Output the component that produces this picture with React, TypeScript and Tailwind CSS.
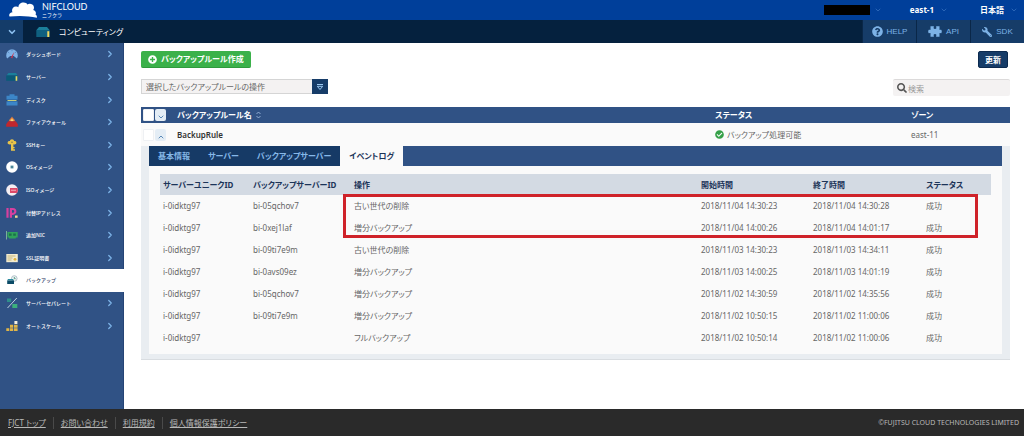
import { useState } from "react";
import type { ReactNode } from "react";
import { ChevronDown, ChevronRight, ChevronUp } from "lucide-react";
import {
  FaCheckCircle,
  FaPlusCircle,
  FaQuestionCircle,
  FaSearch,
  FaWrench,
} from "react-icons/fa";

/* ---------------------- DATA ---------------------- */

const logs = [
  ["i-0idktg97", "bi-05qchov7", "古い世代の削除", "2018/11/04 14:30:23", "2018/11/04 14:30:28", "成功"],
  ["i-0idktg97", "bi-0xej1laf", "増分バックアップ", "2018/11/04 14:00:26", "2018/11/04 14:01:17", "成功"],
  ["i-0idktg97", "bi-09ti7e9m", "古い世代の削除", "2018/11/03 14:30:23", "2018/11/03 14:34:11", "成功"],
  ["i-0idktg97", "bi-0avs09ez", "増分バックアップ", "2018/11/03 14:00:25", "2018/11/03 14:01:19", "成功"],
  ["i-0idktg97", "bi-05qchov7", "増分バックアップ", "2018/11/02 14:30:59", "2018/11/02 14:35:56", "成功"],
  ["i-0idktg97", "bi-09ti7e9m", "増分バックアップ", "2018/11/02 10:50:15", "2018/11/02 11:00:06", "成功"],
  ["i-0idktg97", "", "フルバックアップ", "2018/11/02 10:50:14", "2018/11/02 11:00:06", "成功"],
];

const tabs = ["基本情報", "サーバー", "バックアップサーバー", "イベントログ"];

const footerLinks = ["FJCT トップ", "お問い合わせ", "利用規約", "個人情報保護ポリシー"];

/* ---------------------- ICONS ---------------------- */

const Svg = ({ children }: { children: ReactNode }) => (
  <svg viewBox="0 0 12 12" className="w-3 h-3 shrink-0" aria-hidden="true">
    {children}
  </svg>
);

const ServerIcon = () => (
  <Svg>
    <path d="M2.5 2h7.5l1.8 2.4H.5z" fill="#1b7f9b" />
    <path d="M.2 4.4h11.6v5.4H.2z" fill="#0b5a78" />
    <path d="M9.6 5.2h1.7v4.6H9.6z" fill="#e8d96a" />
  </Svg>
);

const menu: { label: string; icon: ReactNode }[] = [
  {
    label: "ダッシュボード",
    icon: (
      <Svg>
        <path d="M.2 7.5a5.8 6.200 0 1 1 11.600 0c0 1.200-.4 2.200-1 3L7.800 8H4.200l-3 2.500c-.6-.8-1-1.800-1-3z" fill="#7fb2e6" />
        <path d="M6 1.500v1.600M2 4l1.300 1M10 4 8.700 5" stroke="#4a78b4" strokeWidth=".7" />
        <path d="m8.200 4-3.400 5.600 1.500.8z" fill="#c8364d" />
      </Svg>
    ),
  },
  { label: "サーバー", icon: <ServerIcon /> },
  {
    label: "ディスク",
    icon: (
      <Svg>
        <path d="M3.5.3h5v1.5h3v4H.5v-4h3z" fill="#3c86c8" />
        <path d="M.5 7.2h11v4.3H.5z" fill="#3c86c8" />
        <path d="M.5 5.8h11v1.4H.5z" fill="#1f4a78" />
        <path d="M1.5 6h9v.9h-9z" fill="#d8dc7c" />
      </Svg>
    ),
  },
  {
    label: "ファイアウォール",
    icon: (
      <Svg>
        <path d="M6 .6c.7 1.8 3 2.4 3 4.6H3C3 3 5.300 2.400 6 .6z" fill="#e8803c" />
        <path d="M6 2.600c.5 1 1.600 1.400 1.600 2.800H4.400c0-1.400 1.100-1.800 1.600-2.800z" fill="#f8d878" />
        <path d="M2.200 5.200h7.600l2 3v2.600H.2V8.200z" fill="#c1272d" />
      </Svg>
    ),
  },
  {
    label: "SSHキー",
    icon: (
      <Svg>
        <path
          d="M6 .3c1.300 0 2 .8 2 1.700 1.200-.3 2.400.4 2.400 1.700S9 5.800 7.400 5.200V8h1.200v1.200H7.400v1.100H9v1.400H5V5.200C3 5.800 1.600 5 1.600 3.700S2.800 1.700 4 2C4 1.100 4.700.3 6 .3z"
          fill="#e8c34a"
        />
        <circle cx="6" cy="3.300" r=".8" fill="#8a7a4a" />
      </Svg>
    ),
  },
  {
    label: "OSイメージ",
    icon: (
      <Svg>
        <circle cx="6" cy="6" r="5.800" fill="#fff" />
        <circle cx="6" cy="6" r="2.100" fill="#a9c8cf" />
        <circle cx="6" cy="6" r="1" fill="#2f6f86" />
      </Svg>
    ),
  },
  {
    label: "ISOイメージ",
    icon: (
      <Svg>
        <circle cx="6" cy="6" r="5.800" fill="#f4eef2" />
        <path d="M4 4h7.400a5.800 5.800 0 0 1-.4 5H4z" fill="#dc4868" />
        <path d="M5 5.800h5v.8H5z" fill="#f7c6d0" />
      </Svg>
    ),
  },
  {
    label: "付替IPアドレス",
    icon: (
      <Svg>
        <path
          d="M1.500 1v9.800M4.900 10.800V2h2a2.300 2.300 0 0 1 0 4.800h-2"
          fill="none"
          stroke="#d6409f"
          strokeWidth="2.200"
        />
        <path d="M9 8.500h2.600v2.300H9z" fill="#f0d890" />
      </Svg>
    ),
  },
  {
    label: "追加NIC",
    icon: (
      <Svg>
        <path d="M.5 2v8.500" stroke="#8fc7a0" strokeWidth=".8" />
        <path d="M1.500 3h10.200v5.400H9.800v1H3v-1H1.500z" fill="#2fa35a" />
        <path d="M3 4.600h2.600v2.200H3zm4.200 0h2.600v2.200H7.200z" fill="#1c6f4a" />
      </Svg>
    ),
  },
  {
    label: "SSL証明書",
    icon: (
      <Svg>
        <path d="M.3 2h11.500v8.200H.3z" fill="#f3ecd0" />
        <path d="M1.500 4h8M1.500 6h5M1.500 8h4" stroke="#b8a96a" strokeWidth=".8" />
        <circle cx="9" cy="7.300" r="1.400" fill="#e2b33c" />
      </Svg>
    ),
  },
  {
    label: "バックアップ",
    icon: (
      <Svg>
        <circle cx="8.300" cy="4.500" r="2.800" fill="#eef3f5" stroke="#9fb4bd" strokeWidth=".8" />
        <path d="M8.300 3v1.700h1.400" stroke="#3e8a6c" strokeWidth=".8" fill="none" />
        <path d="M2 5h5l1 1.500H1.200z" fill="#2b8a9e" />
        <path d="M1.200 6.500H8V10H1.200z" fill="#0b4a66" />
      </Svg>
    ),
  },
  {
    label: "サーバーセパレート",
    icon: (
      <Svg>
        <path d="M1 1.500h4.200V5H1z" fill="#2f8f8a" />
        <path d="M6.300 7h5v4h-5z" fill="#3cb07c" />
        <path d="M10.800 1 1.500 11" stroke="#cfe0ea" strokeWidth=".9" />
      </Svg>
    ),
  },
  {
    label: "オートスケール",
    icon: (
      <Svg>
        <path d="M.3 8.200h3v2.900h-3zM4 8.200h3v2.900H4zM7.800 8.200h3.800v2.900H7.800zM4 4.800h3v2.900H4zM7.800 4.800h3.800v2.900H7.800z" fill="#e0b548" />
        <path d="M8.400 1h3v3h-3z" fill="#f4efe0" />
      </Svg>
    ),
  },
];

/* ---------------------- SMALL COMPONENTS ---------------------- */

const PuzzleIcon = () => (
  <svg viewBox="0 0 14 11" className="w-[14px] h-[11px]" fill="currentColor" aria-hidden="true">
    <path d="M2.500.3h3.200c.6.800-.3 1.300-.1 2 .4.9 2.400.9 2.800 0 .2-.7-.7-1.200-.1-2h3.200v3.500c.6.300 1-.4 1.700 0 .8.500.8 2.900 0 3.400-.7.400-1.100-.3-1.700 0v3.500H8.300c-.6-.8.300-1.300.1-2-.4-.9-2.400-.9-2.800 0-.2.7.700 1.200.1 2H2.500V7.200c-.6-.3-1 .4-1.700 0-.8-.5-.8-2.900 0-3.400.7-.4 1.100.3 1.700 0z" />
  </svg>
);

const HeaderLink = ({ icon, label }: { icon: ReactNode; label: string }) => (
  <a
    href="#"
    className="w-[54px] flex items-center justify-center gap-1 bg-[#163c68] border-l border-[#0a2748] text-[#7db2e6] font-['Liberation_Sans',sans-serif]"
  >
    {icon}
    {label}
  </a>
);

const RowToggle = ({ open, label }: { open?: boolean; label: string }) => (
  <div className="flex items-center gap-px">
    <input
      type="checkbox"
      aria-label={label}
      className="appearance-none w-[11px] h-3 bg-white rounded-[1px] border border-[#eef0f3]"
    />
    <button
      type="button"
      aria-label="詳細の開閉"
      className="w-[11px] h-3 flex items-end justify-center rounded-[2px] bg-[#e4edf5] text-[#5a8ab8]"
    >
      {open ? <ChevronUp className="w-2 h-2" strokeWidth={3} /> : <ChevronDown className="w-2 h-2" strokeWidth={3} />}
    </button>
  </div>
);

const Sidebar = () => (
  <nav className="w-[124px] shrink-0 bg-[#305285] border-r border-[#254475]">
    <ul className="grid auto-rows-fr h-[294px] [font-feature-settings:normal]">
      {menu.map(({ label, icon }) => {
        const active = label === "バックアップ";
        return (
          <li key={label} className="flex">
            <a
              href="#"
              className={`flex-1 flex items-center gap-2 pl-[6px] pr-2 text-[5px] font-medium ${
                active ? "bg-white text-[#1c3458] -mr-px" : "text-white"
              }`}
            >
              {icon}
              <span className="flex-1">{label}</span>
              {!active && (
                <ChevronRight className="w-[10px] h-[10px] text-[#7db4e8]" strokeWidth={3} />
              )}
            </a>
          </li>
        );
      })}
    </ul>
  </nav>
);

const EventLog = () => (
  <div className="relative px-[11px] pt-2 pb-[5px]">
    <table className="w-full table-fixed text-left">
      <colgroup>
        <col className="w-[90px]" />
        <col className="w-[101px]" />
        <col />
        <col className="w-[112px]" />
        <col className="w-[113px]" />
        <col className="w-[68px]" />
      </colgroup>
      <thead className="bg-[#d3dae3] text-[#1c3458]">
        <tr className="h-[21px]">
          {["サーバーユニークID", "バックアップサーバーID", "操作", "開始時間", "終了時間", "ステータス"].map((h) => (
            <th key={h} className="pl-[3px] font-bold whitespace-nowrap">
              {h}
            </th>
          ))}
        </tr>
      </thead>
      <tbody>
        {logs.map((row, i) => (
          <tr key={i} className="h-[22px]">
            {row.map((cell, j) => (
              <td key={j} className="pl-[3px] whitespace-nowrap">
                {cell}
              </td>
            ))}
          </tr>
        ))}
      </tbody>
    </table>
    {/* Marks the two latest generations */}
    <div className="absolute left-[194px] right-6 top-7 h-[44px] border-3 border-[#cf2229]" />
  </div>
);

/* ---------------------- MAIN PAGE ---------------------- */

export default function App() {
  const [tab, setTab] = useState("イベントログ");

  return (
    <div
      lang="ja"
      className="min-h-screen flex flex-col bg-white text-[8px] leading-3 text-[#666] font-['Noto_Sans','Noto_Sans_CJK_JP',sans-serif] [font-feature-settings:'palt']"
    >
      {/* Top bar */}
      <header>
        <div className="h-5 flex items-center justify-between bg-[#003f9a] text-white pl-[9px] pr-[6px]">
          <a href="#" className="flex items-center gap-[5px]">
            <svg viewBox="0 0 28 16" className="w-7 h-4" aria-hidden="true">
              <path
                d="M.6 14.600C-.6 12.600 1 10.200 3.500 10.200 2.200 7.800 3.800 4.400 7.200 4.600c1 0 1.700.3 2.200.7C9.400 2.300 12 .4 14.800.6c1.700.1 2.800.8 3.600 1.800 2-1.500 5.800-.6 6.400 2 .4 1.400.1 2.600-.6 3.500 2.600.9 3.300 3 2.300 4.700 1.300.8 1.700 2 1.300 3.200-8-1.900-18-2.500-27.200-1.200z"
                fill="#fff"
              />
            </svg>
            <span className="flex flex-col">
              <span className="text-[9px] leading-[10px] font-['Lato',sans-serif]">NIFCLOUD</span>
              <span className="text-[5px] leading-[6px] [font-feature-settings:normal]">ニフクラ</span>
            </span>
          </a>
          <div className="flex items-center font-bold">
            <div className="w-[46px] h-[10px] bg-black" />
            <ChevronDown className="w-2 h-2 ml-1 mr-7 text-[#3f78c4]" />
            <button type="button" className="flex items-center gap-[6px] mr-8">
              east-1 <ChevronDown className="w-2 h-2 text-[#3f78c4]" />
            </button>
            <button type="button" className="flex items-center gap-[6px]">
              日本語 <ChevronDown className="w-2 h-2 text-[#3f78c4]" />
            </button>
          </div>
        </div>
        <div className="h-[23px] flex bg-[#05213e] text-white">
          <button type="button" aria-label="メニュー" className="w-[23px] flex items-center justify-center bg-[#143c69]">
            <ChevronDown className="w-[10px] h-[10px] text-[#8cc0f0]" strokeWidth={4} />
          </button>
          <h1 className="flex-1 flex items-center gap-[9px] pl-[13px]">
            <svg viewBox="0 0 14 12" className="w-[14px] h-3" aria-hidden="true">
              <path d="M3 1h8l2.500 3H.5z" fill="#1b7f9b" />
              <path d="M.3 4h13.400v7H.3z" fill="#0f6080" />
              <path d="M11.300 5.200h2v5.800h-2z" fill="#f0d860" />
            </svg>
            コンピューティング
          </h1>
          <HeaderLink icon={<FaQuestionCircle className="w-[11px] h-[11px]" />} label="HELP" />
          <HeaderLink icon={<PuzzleIcon />} label="API" />
          <HeaderLink icon={<FaWrench className="w-[10px] h-[10px] -scale-x-100" />} label="SDK" />
        </div>
      </header>

      <div className="flex-1 flex">
        <Sidebar />

        <main className="flex-1 min-w-0 pl-[17px] pr-[14px] pt-2 pb-12">
          {/* Actions */}
          <div className="flex justify-between pr-[2px]">
            <button
              type="button"
              className="h-[17px] px-[7px] flex items-center gap-1 rounded-[2px] bg-[#3bb14a] border-b border-[#2f9a3d] text-white font-bold"
            >
              <FaPlusCircle className="w-[9px] h-[9px]" />
              バックアップルール作成
            </button>
            <button
              type="button"
              className="h-[17px] w-[30px] rounded-[2px] bg-[#163c68] border border-[#0c2a4f] text-white font-bold"
            >
              更新
            </button>
          </div>

          <div className="flex items-start justify-between mt-[11px] mb-[11px]">
            <div className="relative">
              <select
                aria-label="操作"
                className="appearance-none block w-[187px] h-[15px] pl-1 pr-5 bg-[#f4f2f2] border border-[#d5d5d5]"
              >
                <option>選択したバックアップルールの操作</option>
              </select>
              <span className="absolute right-0 top-0 w-4 h-[15px] flex items-center justify-center bg-[#163c68] pointer-events-none">
                <svg viewBox="0 0 8 8" className="w-2 h-2" aria-hidden="true">
                  <path d="M1 1.500h6M1.300 3.300h5.400L4 6.500z" fill="none" stroke="#9cc8f0" />
                </svg>
              </span>
            </div>
            <div className="relative">
              <FaSearch className="absolute left-1 top-1 w-[10px] h-[10px] text-[#555]" />
              <input
                type="text"
                aria-label="検索"
                placeholder="検索"
                className="block w-[117px] h-[17px] pl-[15px] rounded-[2px] bg-[#f4f2f2] border-t border-[#dcdada] placeholder:text-[#999]"
              />
            </div>
          </div>

          {/* Backup rules */}
          <table className="w-full table-fixed text-left">
            <colgroup>
              <col />
              <col className="w-[196px]" />
              <col className="w-[99px]" />
            </colgroup>
            <thead className="bg-[#305285] text-white">
              <tr className="h-4">
                <th className="pl-[2px] font-bold">
                  <div className="flex items-center">
                    <RowToggle label="すべて選択" />
                    <span className="pl-[11px] pr-1">バックアップルール名</span>
                    <svg viewBox="0 0 5 8" className="w-[5px] h-2" aria-hidden="true">
                      <path d="M.5 3 2.500 1l2 2M.5 5l2 2 2-2" fill="none" stroke="#a9c4e4" strokeWidth=".8" />
                    </svg>
                  </div>
                </th>
                <th className="font-bold">ステータス</th>
                <th className="font-bold">ゾーン</th>
              </tr>
            </thead>
            <tbody>
              <tr className="h-[23px] bg-[#fafafa]">
                <td className="pl-[2px]">
                  <div className="flex items-center">
                    <RowToggle open label="BackupRuleを選択" />
                    <span className="pl-[11px] font-semibold text-[#333]">BackupRule</span>
                  </div>
                </td>
                <td>
                  <div className="flex items-center gap-[3px]">
                    <FaCheckCircle className="w-[9px] h-[9px] text-[#35a048]" />
                    バックアップ処理可能
                  </div>
                </td>
                <td>east-11</td>
              </tr>
              <tr>
                <td colSpan={3} className="px-2 pb-[5px] bg-[#e9edf1] border-b border-[#d9dde1]">
                  <div className="bg-[#fafafa]">
                    <div role="tablist" className="flex h-5 bg-[#305285]">
                      {tabs.map((t) => (
                        <button
                          key={t}
                          type="button"
                          role="tab"
                          aria-selected={t === tab}
                          onClick={() => setTab(t)}
                          className={`px-[9px] font-bold ${
                            t === tab ? "bg-[#fafafa] text-[#1c3458]" : "bg-[#163a66] text-[#86b8e8]"
                          }`}
                        >
                          {t}
                        </button>
                      ))}
                    </div>
                    <EventLog />
                  </div>
                </td>
              </tr>
            </tbody>
          </table>
        </main>
      </div>

      {/* Footer */}
      <footer className="h-[27px] flex items-center justify-between pl-2 pr-[5px] bg-[#2a2a2a] text-[#b8b8b8]">
        <ul className="flex divide-x divide-[#4a4a4a]">
          {footerLinks.map((l) => (
            <li key={l} className="px-[7px] first:pl-0">
              <a href="#" className="underline">
                {l}
              </a>
            </li>
          ))}
        </ul>
        <small className="text-[7px]">©FUJITSU CLOUD TECHNOLOGIES LIMITED</small>
      </footer>
    </div>
  );
}
